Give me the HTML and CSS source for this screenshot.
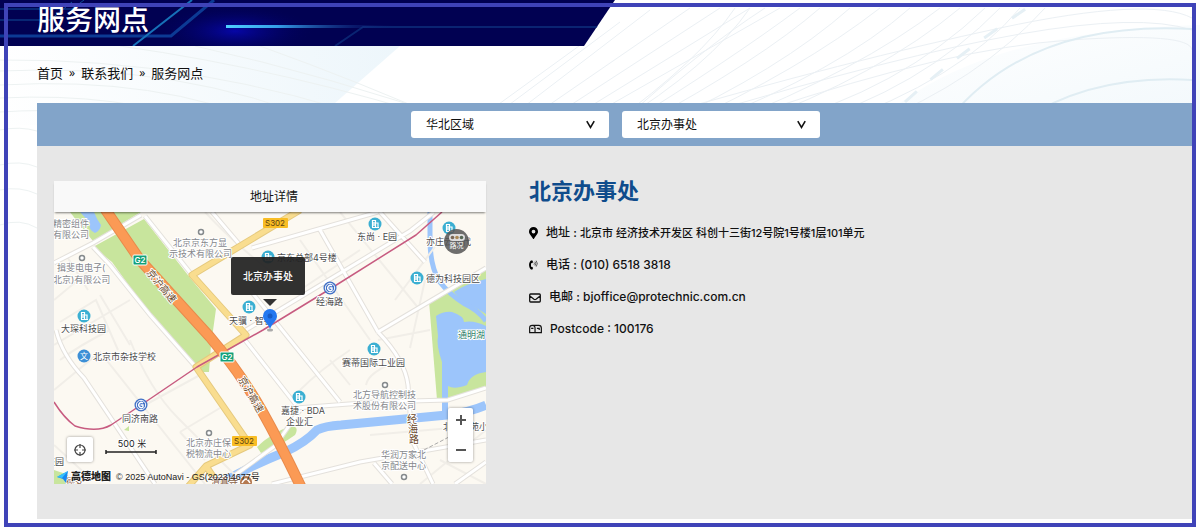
FILE: index.html
```html
<!DOCTYPE html>
<html lang="zh-CN">
<head>
<meta charset="utf-8">
<meta name="viewport" content="width=device-width, initial-scale=1">
<title>服务网点</title>
<link rel="stylesheet" href="styles.css">
</head>
<body>
<div class="page">
  <svg class="waves" viewBox="0 0 1200 528" preserveAspectRatio="xMidYMin slice" aria-hidden="true">
    <defs>
      <linearGradient id="tint" x1="0" y1="0" x2="1" y2="0"><stop offset="0" stop-color="#fff"/><stop offset="1" stop-color="#edf6fb"/></linearGradient>
      <linearGradient id="tint2" x1="0" y1="0" x2="1" y2="1"><stop offset="0" stop-color="#fff"/><stop offset="1" stop-color="#f3f9fc"/></linearGradient>
    </defs>
    <path d="M0 46H400L310 125H0z" fill="url(#tint)"/>
    <path d="M900 103Q1000 30 1200 25V110H900z" fill="url(#tint2)"/>
    <g class="wave-left">
      <path d="M0 71Q180 62 330 125M0 60Q200 58 390 125M0 85Q160 76 270 125M0 98Q120 92 210 125M0 112Q90 106 150 125M120 46Q290 70 460 125M195 46Q330 76 470 125M260 46Q360 82 450 122M0 130Q20 126 37 131M0 165Q20 160 37 167M0 190Q20 186 37 194M0 225Q20 218 37 228"/>
    </g>
    <g class="wave-mid">
      <path d="M470 125L590 38M482 125L620 22M500 125L650 10M520 125L690 8M540 125L720 8M560 125L750 8M575 125L780 8M610 125Q700 60 735 8M614 125Q710 66 750 8M618 125Q700 50 765 8M625 125Q730 60 800 8M640 125Q760 60 820 8M660 125Q780 70 850 8M680 125Q800 70 880 8M700 125Q840 70 910 8M720 125Q860 70 940 8M745 125Q880 75 960 8M770 125Q900 90 985 8M800 125Q920 90 1000 8M830 125Q960 80 1020 8M870 125Q980 80 1045 8"/>
      <path d="M650 118Q850 60 1000 28T1192 18M690 118Q900 55 1020 34T1192 30M760 112Q950 48 1070 40T1192 50"/>
    </g>
    <path class="wave-arc" d="M950 118Q1030 20 1192 29M1020 122Q1090 74 1192 80"/>
    <path class="wave-dash" d="M905 102Q950 60 1030 6"/>
  </svg>

  <header class="hero">
    <svg class="hero-art" viewBox="0 0 615 46" preserveAspectRatio="none" aria-hidden="true">
      <defs>
        <radialGradient id="glow"><stop offset="0" stop-color="#0606a6"/><stop offset="1" stop-color="#010158" stop-opacity="0"/></radialGradient>
        <linearGradient id="beam"><stop offset="0" stop-color="#4fd0ff"/><stop offset=".3" stop-color="#35a0ea"/><stop offset="1" stop-color="#0a1570" stop-opacity="0"/></linearGradient>
      </defs>
      <rect width="615" height="46" fill="#010152"/>
      <ellipse cx="235" cy="31" rx="80" ry="26" fill="url(#glow)"/>
      <path d="M0 36H171L214 0" fill="none" stroke="#0c3a94" stroke-width="3"/>
      <path d="M133 46L192 0" fill="none" stroke="#1671b8" stroke-width="2"/>
      <path d="M0 9H72L84 0M0 20H50L72 2" fill="none" stroke="#104f96" stroke-width="1"/>
      <path d="M335 46L363 27H610" fill="none" stroke="#0a2472" stroke-width="2"/>
      <rect x="226" y="25" width="170" height="3" fill="url(#beam)"/>
    </svg>
    <h1 class="hero-title">服务网点</h1>
  </header>

  <main class="content">
    <nav class="crumbs" aria-label="breadcrumb">
      <a href="#">首页</a><span>»</span><a href="#">联系我们</a><span>»</span><a href="#">服务网点</a>
    </nav>

    <section class="filters">
      <div class="picker">
        <select aria-label="区域"><option>华北区域</option></select>
        <svg viewBox="0 0 8 8" aria-hidden="true"><path d="M.7 1L4 6.600L7.300 1"/></svg>
      </div>
      <div class="picker">
        <select aria-label="办事处"><option>北京办事处</option></select>
        <svg viewBox="0 0 8 8" aria-hidden="true"><path d="M.7 1L4 6.600L7.300 1"/></svg>
      </div>
    </section>

    <section class="office">
      <div class="map-card">
        <div class="map-head">地址详情</div>
        <div class="map">
          <svg class="map-art" viewBox="54 212 432 272" role="img" aria-label="地图">
            <rect x="54" y="212" width="432" height="272" fill="#fcf9f2"/>
            <g class="park">
              <path d="M70 212H141L93 241L83 229z"/>
              <path d="M93 247L144 219L191 279L216 309L211 345L209 372H201L194 364L166 330L150 315L112 262z"/>
              <path d="M429 301L486 268V388L447 400H437z"/>
              <path d="M257 447Q270 434 290 426Q300 426 295 435Q280 446 261 453z"/>
              <path d="M54 470L66 474L78 484H54zM124 430l5-4v5z"/>
            </g>
            <g class="water">
              <path d="M80 212H94Q97 220 101 225Q100 231 95 233Q88 230 90 223z"/>
              <path d="M454 292Q465 284 486 279V314Q474 306 462 301z"/>
              <path d="M436 316Q444 311 452 312Q464 316 464 322Q474 320 486 326V372Q470 374 467 385Q454 390 448 386V412H442V362Q436 345 438 336z"/>
              <path class="stream" d="M430 212V240Q430 265 439 281Q450 295 465 304Q478 310 486 321"/>
              <path class="river" d="M217 486Q245 468 285 452Q306 442 317 430Q325 426 341 425L447 415Q470 412 486 405"/>
            </g>
            <g class="lane">
              <path d="M60 322L96 300L118 350M54 300L90 270M54 390L100 352L205 484M130 340Q150 390 178 418L240 480M66 255L88 290M100 295L130 345M340 212L420 310M300 240L370 340M360 250L300 290M54 345L130 300M205 212Q240 250 290 286M378 340L430 330M350 385L330 360M366 385Q368 372 400 360M180 432L220 408M180 432L205 460M300 390Q320 370 350 350M60 360Q80 345 110 330M370 435L486 425M410 348L425 280M395 300L440 240M145 405L200 375M54 445L90 478M420 484L486 430M440 460L486 484"/>
            </g>
            <g class="road-edge">
              <path d="M54 263L93 243L141 215M93 247L110 265L150 315L194 365M56 330Q62 355 84 378L155 484M145 216L192 275M212 212L240 245M246 330L332 278L410 231L434 212M252 248L378 212M250 290L340 402M245 340L296 405M296 408L375 402L448 400L486 388M378 332L486 268M378 332Q405 360 408 385L412 440L433 484M320 230L378 332M380 212L425 262M235 475L275 446L300 410M272 484L360 462L486 440M374 463L392 484M455 484L486 462"/>
            </g>
            <g class="road">
              <path d="M54 263L93 243L141 215M93 247L110 265L150 315L194 365M56 330Q62 355 84 378L155 484M145 216L192 275M212 212L240 245M246 330L332 278L410 231L434 212M252 248L378 212M250 290L340 402M245 340L296 405M296 408L375 402L448 400L486 388M378 332L486 268M378 332Q405 360 408 385L412 440L433 484M320 230L378 332M380 212L425 262M235 475L275 446L300 410M272 484L360 462L486 440M374 463L392 484M455 484L486 462"/>
            </g>
            <path class="rail" d="M424 450L470 426"/>
            <path class="avenue-edge" d="M300 210L192 275L246 335L196 367L250 445L206 466L187 488M206 466L218 484"/>
            <path class="avenue" d="M300 210L192 275L246 335L196 367L250 445L206 466L187 488M206 466L218 484"/>
            <path class="metro" d="M442 212L416 235L330 289L263 330L197 367L141 405L111 425Q97 433 75 426Q64 418 54 402"/>
            <path class="highway-edge" d="M105 209L140 260L210 337Q240 372 262 411Q280 443 301 487"/>
            <path class="highway" d="M105 209L140 260L210 337Q240 372 262 411Q280 443 301 487"/>

            <g>
              <rect class="g2" x="133" y="255" width="14" height="10" rx="1"/><text class="shield" x="140" y="263">G2</text>
              <rect class="g2" x="220" y="352" width="14" height="10" rx="1"/><text class="shield" x="227" y="360">G2</text>
              <rect class="s302" x="263" y="218" width="25" height="10" rx="1"/><text class="state" x="275" y="226">S302</text>
              <rect class="s302" x="232" y="436" width="25" height="10" rx="1"/><text class="state" x="244" y="444">S302</text>
            </g>
            <g class="road-name">
              <text transform="translate(146 273) rotate(50)">京沪高速</text>
              <text transform="translate(238 379) rotate(60)">京沪高速</text>
              <text x="407" y="423">经</text><text x="408" y="433">海</text><text x="409" y="443">路</text>
            </g>
            <g class="poi-grey">
              <text x="53" y="227">精密组件</text><text x="53" y="238">有限公司</text>
              <text x="57" y="271">揖斐电电子(</text><text x="53" y="283">北京)有限公司</text>
              <text x="173" y="246">北京京东方显</text><text x="169" y="257">示技术有限公司</text>
              <text x="353" y="398">北方导航控制技</text><text x="353" y="409">术股份有限公司</text>
              <text x="186" y="446">北京亦庄保</text><text x="186" y="457">税物流中心</text>
              <text x="381" y="458">华润万家北</text><text x="381" y="469">京配送中心</text>
            </g>
            <g class="ring"><circle cx="201" cy="232" r="2.500"/><circle cx="82" cy="258" r="2.500"/><circle cx="385" cy="385" r="2.500"/><circle cx="209" cy="433" r="2.500"/><circle cx="404" cy="477" r="2.500"/></g>
            <g class="poi">
              <text x="61" y="332">大琛科技园</text>
              <text x="93" y="360">北京市杂技学校</text>
              <text x="122" y="422">同济南路</text>
              <text x="277" y="261">京东总部4号楼</text>
              <text x="357" y="240">东尚 · E园</text>
              <text x="426" y="245">亦庄云时代</text>
              <text x="426" y="282">德为科技园区</text>
              <text x="316" y="305">经海路</text>
              <text x="229" y="324">天骥 · 智谷</text>
              <text x="342" y="366">赛蒂国际工业园</text>
              <text x="281" y="414">嘉捷 · BDA</text><text x="286" y="425">企业汇</text>
              <text x="443" y="430">北京云苑小</text>
              <text x="46" y="465">技园</text><text class="brown" x="66" y="485">德安</text>
              <text class="lake" x="458" y="338">通明湖</text>
              <text class="brown" x="211" y="485">清真寺</text>
            </g>
            <circle cx="246" cy="482" r="6" fill="#b4784f"/><path d="M242 483Q246 475 250 483" stroke="#fff" stroke-width="1.500" fill="none"/>
            <defs>
              <g id="tower"><circle r="6.500" fill="#3bafd2"/><path d="M-3 3.500H4M-2.500 3V-3.500H.5V3M.5-1H3V3M-1-2V2" fill="none" stroke="#fff" stroke-width="1.200"/></g>
              <g id="station"><circle r="6.500" fill="#3f6fc6"/><circle r="4.700" fill="none" stroke="#fff"/><path d="M2-2A2.600 2.600 0 1 0 2 2V0H-.5" fill="none" stroke="#fff" stroke-width="1.400"/></g>
            </defs>
            <use href="#tower" x="84" y="316"/><use href="#tower" x="268" y="257"/><use href="#tower" x="375" y="224"/><use href="#tower" x="449" y="228"/><use href="#tower" x="417" y="278"/><use href="#tower" x="249" y="307"/><use href="#tower" x="374" y="349"/><use href="#tower" x="299" y="397"/>
            <use href="#station" x="330" y="288"/><use href="#station" x="141" y="405"/>
            <circle cx="84" cy="356" r="6.500" fill="#3d8fd6"/><text class="school" x="84" y="359">文</text>
            <ellipse cx="270" cy="330" rx="3" ry="1.500" fill="#aaa"/>
            <path d="M270 329C268 323 263 321 263 316A7 7 0 0 1 277 316C277 321 272 323 270 329z" fill="#2478f0"/><circle cx="270" cy="316" r="2.500" fill="#185bc4"/>
            <text class="scale" x="132" y="447">500 米</text>
            <path d="M106 450V454M106 452H156M156 450V454" fill="none" stroke="#222" stroke-width="1.500"/>
            <path d="M57 477L68 471L66 483L63 479z" fill="#1787f0"/><path d="M57 477L68 471L62 478z" fill="#35c1fb"/>
            <text class="brand" x="71" y="480">高德地图</text>
            <text class="legal" x="116" y="480">© 2025 AutoNavi - GS(2023)4677号</text>
          </svg>
          <div class="callout">北京办事处</div>
          <button class="traffic" type="button"><svg viewBox="0 0 16 7" aria-hidden="true"><rect width="16" height="7" rx="3.500" fill="#ddd"/><circle cx="3.500" cy="3.500" r="1.800" fill="#765"/><circle cx="8" cy="3.500" r="1.800" fill="#a85"/><circle cx="12.500" cy="3.500" r="1.800" fill="#565"/></svg>路况</button>
          <button class="locate" type="button" aria-label="定位"><svg viewBox="0 0 14 14" aria-hidden="true"><circle cx="7" cy="7" r="5"/><path d="M7 1V5M7 9V13M1 7H5M9 7H13"/></svg></button>
          <div class="zoom">
            <button type="button" aria-label="放大"><svg viewBox="0 0 10 10" aria-hidden="true"><path d="M0 5H10M5 0V10"/></svg></button>
            <button type="button" aria-label="缩小"><svg viewBox="0 0 10 10" aria-hidden="true"><path d="M0 5H10"/></svg></button>
          </div>
        </div>
      </div>

      <div class="details">
        <h2>北京办事处</h2>
        <ul>
          <li><svg class="i-pin" viewBox="0 0 384 512" aria-hidden="true"><path fill-rule="evenodd" d="M172 502C27 291 0 269 0 192a192 192 0 1 1 384 0c0 77-27 99-172 310a24 24 0 0 1-40 0zM192 272a80 80 0 1 0 0-160 80 80 0 0 0 0 160z"/></svg><span>地址 : <span class="address">北京市 经济技术开发区 科创十三街12号院1号楼1层101单元</span></span></li>
          <li><svg class="i-phone" viewBox="0 0 10 12" aria-hidden="true"><path d="M3.500.8L1.800 1.300C-.5 4 -.5 8 1.800 10.700L3.500 11.200 4.600 9.200 3.400 8 2.500 8.200Q1.900 6 2.500 3.800L3.400 4 4.600 2.800z"/><path class="thin" d="M5.500 3.300Q6.500 4.500 5.500 5.700M6.700 2.200Q8.400 4.500 6.700 6.800M8 1.200Q10.500 4.500 8 7.800"/></svg><span>电话 : (010) 6518 3818</span></li>
          <li><svg class="i-mail" viewBox="0 0 12 12" aria-hidden="true"><path class="line" d="M1.600 3H10.400Q11.300 3 11.300 3.900V10.100Q11.300 11 10.400 11H1.600Q.7 11 .7 10.100V3.900Q.7 3 1.600 3zM.9 5L5 8.200Q6 8.900 7 8.200L11.100 5"/></svg><span>电邮 : bjoffice@protechnic.com.cn</span></li>
          <li><svg class="i-post" viewBox="0 0 14 10" aria-hidden="true"><path class="line" d="M3.500 1H10.500Q13.300 1 13.300 4V8.800H.7V4Q.7 1 3.500 1zM3.500 1Q6.500 1 6.500 4V8.800M2.300 4.300H4.800M8.500 4.300H11V6"/></svg><span>Postcode : 100176</span></li>
        </ul>
      </div>
    </section>
  </main>
</div>
</body>
</html>
```
FILE: styles.css
```css
* { box-sizing: border-box; }
body {
  margin: 0;
  background: #fff;
  color: #111;
  font-family: Inter, "Noto Sans CJK SC", sans-serif;
  font-size: 12px;
}
button, select { font: inherit; color: inherit; }

.page { position: relative; min-height: 100vh; padding-bottom: 9px; overflow: hidden; isolation: isolate; }
.page::after {
  content: "";
  position: absolute;
  inset: 3px 4px 1px;
  border: 4px solid #3f43b8;
  pointer-events: none;
}
.waves { position: absolute; inset: 0; z-index: -1; width: 100%; height: 100%; fill: none; }
.wave-left { stroke: #edf2f2; }
.wave-mid { stroke: #ebf0f4; }
.wave-arc { stroke: #e0edf3; stroke-width: 2; }
.wave-dash { stroke: #e6f0f5; stroke-width: 3; stroke-dasharray: 16 18; }

.hero {
  display: grid;
  align-items: center;
  width: 51.25%;
  height: 46px;
  clip-path: polygon(0 0, 100% 0, calc(100% - 31px) 100%, 0 100%);
}
.hero > * { grid-area: 1 / 1; }
.hero-art { width: 100%; height: 46px; }
.hero-title {
  margin: 0;
  padding: 0 37px 6px;
  color: #fff;
  font-size: 28px;
  line-height: 40px;
  font-weight: 500;
  z-index: 1;
}

.content { padding: 0 6px 0 37px; }
.crumbs { display: flex; gap: 6px; padding: 17px 0 20px; font-size: 13px; line-height: 20px; }
.crumbs a { color: #111; text-decoration: none; }
.crumbs span { font-family: "Noto Sans", sans-serif; font-size: 12px; }

.filters { display: flex; justify-content: center; gap: 13px; padding: 8px 0; background: #82a4c9; }
.picker { position: relative; width: 198px; }
.picker select {
  display: block;
  appearance: none;
  width: 100%;
  height: 27px;
  padding: 0 15px;
  border: 0;
  border-radius: 3px;
  background: #fff;
}
.picker svg { position: absolute; top: 9px; right: 14px; width: 9px; height: 9px; fill: none; stroke: #111; stroke-width: 1.4; pointer-events: none; }

.office {
  display: flex;
  flex-wrap: wrap;
  gap: 43px;
  padding: 35px 17px;
  background: #e7e7e7;
}
.map-card { flex: 0 1 432px; }
.map-head {
  position: relative;
  z-index: 1;
  padding-left: 8px;
  background: #f9f9f9;
  box-shadow: 0 2px 2px -1px rgba(0, 0, 0, .5);
  line-height: 31px;
  text-align: center;
}
.map { position: relative; overflow: hidden; }
.map-art { display: block; width: 100%; font-size: 9px; }
.park { fill: #c8e59d; }
.water { fill: #9cc5fb; }
.stream, .river { fill: none; stroke: #9cc5fb; }
.stream { stroke-width: 5; }
.river { stroke-width: 9; }
.lane { fill: none; stroke: #f1eee8; stroke-width: 2; }
.road-edge { fill: none; stroke: #e4e1dc; stroke-width: 5; }
.road { fill: none; stroke: #fff; stroke-width: 3; }
.rail { stroke: #aaa; stroke-dasharray: 4 2; }
.avenue-edge, .avenue, .metro, .highway, .highway-edge { fill: none; stroke-linejoin: round; }
.avenue-edge { stroke: #e5c97e; stroke-width: 7; }
.avenue { stroke: #f9dd8f; stroke-width: 5; }
.metro { stroke: #c75b80; stroke-width: 1.5; }
.highway-edge { stroke: #e88a4c; stroke-width: 11; }
.highway { stroke: #fb9a55; stroke-width: 9; }
.g2 { fill: #12a179; stroke: #fff; }
.s302 { fill: #f8bd25; }
.shield, .state { font-size: 8px; text-anchor: middle; }
.shield { fill: #fff; font-weight: 600; }
.state { fill: #5c4313; }
.road-name text, .poi-grey text, .poi text, .scale, .brand { paint-order: stroke; stroke: #fff; stroke-width: 2px; stroke-linejoin: round; }
.road-name { fill: #6a4a2c; font-size: 10px; }
.poi-grey { fill: #85878c; }
.poi { fill: #4c4c4c; }
.poi .lake { fill: #2f7f6c; }
.poi .brown { fill: #8a6248; }
.ring { fill: #fff; stroke: #858a8c; stroke-width: 1.5; }
.school { fill: #fff; font-size: 8px; text-anchor: middle; }
.scale { fill: #222; text-anchor: middle; }
.brand { fill: #222; font-size: 10px; font-weight: 900; }
.legal { fill: #222; font-family: "Liberation Sans", "Noto Sans CJK SC", sans-serif; }

.callout {
  position: absolute;
  left: 177px;
  top: 45px;
  padding: 0 12px;
  border-radius: 2px;
  background: rgba(33, 33, 33, .93);
  color: #fff;
  font-size: 10px;
  font-weight: 500;
  line-height: 38px;
}
.callout::after {
  content: "";
  position: absolute;
  left: 32px;
  top: 42px;
  border: 7px solid transparent;
  border-top-color: #333;
  border-bottom: 0;
}
.traffic {
  position: absolute;
  top: 17px;
  right: 17px;
  display: flex;
  flex-direction: column;
  align-items: center;
  justify-content: center;
  width: 25px;
  height: 25px;
  padding: 0;
  border: 0;
  border-radius: 50%;
  background: rgba(85, 85, 85, .85);
  color: #fff;
  font-size: 7px;
  line-height: 9px;
}
.traffic svg { width: 16px; height: 7px; }
.locate, .zoom { position: absolute; border: 0; border-radius: 2px; background: #fff; box-shadow: 0 0 3px rgba(0, 0, 0, .4); }
.locate { left: 13px; bottom: 22px; display: grid; place-items: center; width: 26px; height: 25px; padding: 0; }
.locate svg { width: 14px; height: 14px; fill: none; stroke: #444; stroke-width: 1.2; }
.zoom { right: 13px; bottom: 22px; display: flex; flex-direction: column; justify-content: space-between; width: 25px; height: 54px; }
.zoom button { display: grid; place-items: center; height: 24px; padding: 0; border: 0; background: none; }
.zoom svg { width: 10px; height: 10px; stroke: #555; stroke-width: 2; }

.details { flex: 1 1 300px; }
.details h2 { margin: 0; color: #0f4c8c; font-size: 22px; line-height: 20px; font-weight: 700; }
.details ul { display: grid; gap: 12px; margin: 22px 0 0; padding: 0; list-style: none; font-weight: 500; line-height: 20px; }
.details li { display: flex; align-items: center; gap: 8px; }
.address { font-size: 11px; }
.details svg { flex: none; height: 12px; }
.details .line { fill: none; stroke: #111; stroke-width: 1.3; }
.details .thin { fill: none; stroke: #111; stroke-width: 0.7; }
.i-pin, .i-phone { width: 9px; }
.i-mail { width: 12px; }
.i-post { width: 13px; }
```
